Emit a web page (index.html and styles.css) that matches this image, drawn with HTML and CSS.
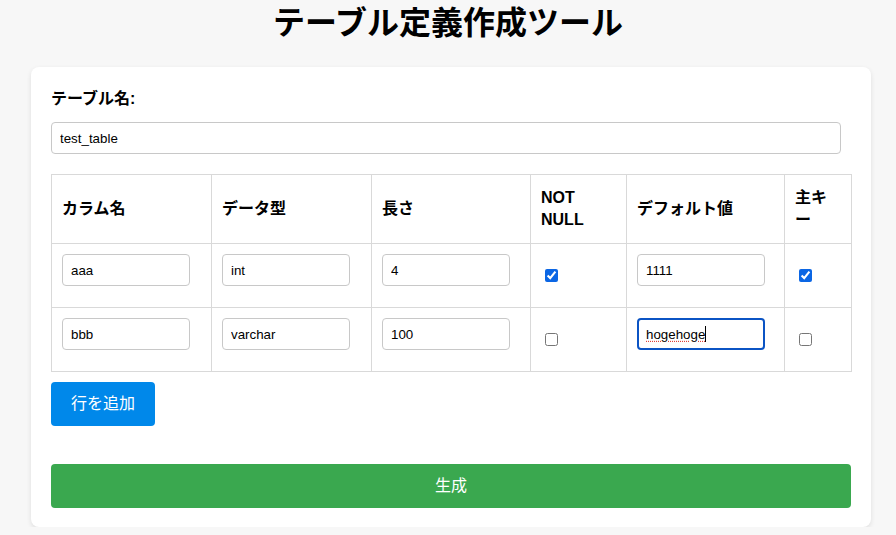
FILE: index.html
```html
<!DOCTYPE html>
<html lang="ja">
<head>
<meta charset="utf-8">
<title>テーブル定義作成ツール</title>
<link rel="stylesheet" href="styles.css">
</head>
<body>
<h1 class="title">テーブル定義作成ツール</h1>
<div class="card">
  <label class="label" for="tname">テーブル名:</label>
  <input id="tname" class="text-input wide" type="text" value="test_table">
  <table class="def-table">
    <colgroup>
      <col class="c-name"><col class="c-type"><col class="c-len"><col class="c-nn"><col class="c-def"><col class="c-pk">
    </colgroup>
    <thead>
      <tr>
        <th>カラム名</th>
        <th>データ型</th>
        <th>長さ</th>
        <th>NOT NULL</th>
        <th>デフォルト値</th>
        <th>主キー</th>
      </tr>
    </thead>
    <tbody>
      <tr>
        <td><input class="text-input cell" type="text" value="aaa"></td>
        <td><input class="text-input cell" type="text" value="int"></td>
        <td><input class="text-input cell" type="text" value="4"></td>
        <td><input class="check" type="checkbox" checked></td>
        <td><input class="text-input cell" type="text" value="1111"></td>
        <td><input class="check" type="checkbox" checked></td>
      </tr>
      <tr>
        <td><input class="text-input cell" type="text" value="bbb"></td>
        <td><input class="text-input cell" type="text" value="varchar"></td>
        <td><input class="text-input cell" type="text" value="100"></td>
        <td><input class="check" type="checkbox"></td>
        <td><span class="focus-wrap"><input class="text-input cell focused" type="text" value="hogehoge"><span class="caret"></span></span></td>
        <td><input class="check" type="checkbox"></td>
      </tr>
    </tbody>
  </table>
  <button class="btn btn-add" type="button">行を追加</button>
  <button class="btn btn-gen" type="button">生成</button>
</div>
</body>
</html>
```
FILE: styles.css
```css
html, body {
  margin: 0;
  padding: 0;
}
body {
  background: #f7f7f7;
  font-family: "Liberation Sans", "Noto Sans CJK JP", sans-serif;
  color: #000;
}
.title {
  margin: 0 0 21px;
  font-size: 32px;
  line-height: 46px;
  font-weight: 700;
  text-align: center;
}
.card {
  box-sizing: border-box;
  width: 840px;
  margin-left: 31px;
  padding: 20px 20px 19px;
  background: #fff;
  border-radius: 8px;
  box-shadow: 0 2px 5px rgba(0, 0, 0, 0.1);
}
.label {
  display: block;
  font-size: 16px;
  font-weight: 700;
  line-height: 24px;
  margin-bottom: 11px;
}
.text-input {
  box-sizing: border-box;
  height: 32px;
  padding: 0 8px;
  border: 1px solid #c8c8c8;
  border-radius: 4px;
  font-family: "Liberation Sans", "Noto Sans CJK JP", sans-serif;
  font-size: 13.33px;
  color: #000;
  background: #fff;
  outline: none;
}
.wide {
  display: block;
  width: 790px;
  margin: 0 0 20px;
}
.def-table {
  width: 800px;
  table-layout: fixed;
  border-collapse: collapse;
  margin-bottom: 10px;
}
.c-name { width: 160px; }
.c-type { width: 160px; }
.c-len { width: 159px; }
.c-nn { width: 96px; }
.c-def { width: 158px; }
.c-pk { width: 67px; }
.def-table th,
.def-table td {
  border: 1px solid #d9d9d9;
  padding: 10px;
  text-align: left;
  vertical-align: middle;
}
.def-table th {
  height: 48px;
  font-size: 16px;
  font-weight: 700;
  line-height: 22px;
}
.def-table td {
  height: 43px;
}
.cell {
  display: block;
  width: 128px;
  margin-bottom: 11px;
}
.check {
  display: block;
  width: 13px;
  height: 13px;
  margin: 0 0 0 4px;
  accent-color: #0b66e4;
}
.focus-wrap {
  position: relative;
  display: block;
  width: 128px;
}
.focused {
  border: 2px solid #0b54c4;
  border-radius: 4px;
  padding: 0 7px;
  text-decoration: underline dotted #e0443a;
  text-underline-offset: 2px;
}
.caret {
  position: absolute;
  left: 68px;
  top: 8px;
  width: 1px;
  height: 16px;
  background: #000;
}
.btn {
  display: block;
  border: none;
  border-radius: 4px;
  color: #fff;
  font-family: "Liberation Sans", "Noto Sans CJK JP", sans-serif;
  font-size: 16px;
  line-height: 24px;
  padding: 10px 20px;
  cursor: pointer;
}
.btn-add {
  background: #0088ea;
  margin-bottom: 38px;
}
.btn-gen {
  width: 100%;
  background: #3aa84f;
}
```
